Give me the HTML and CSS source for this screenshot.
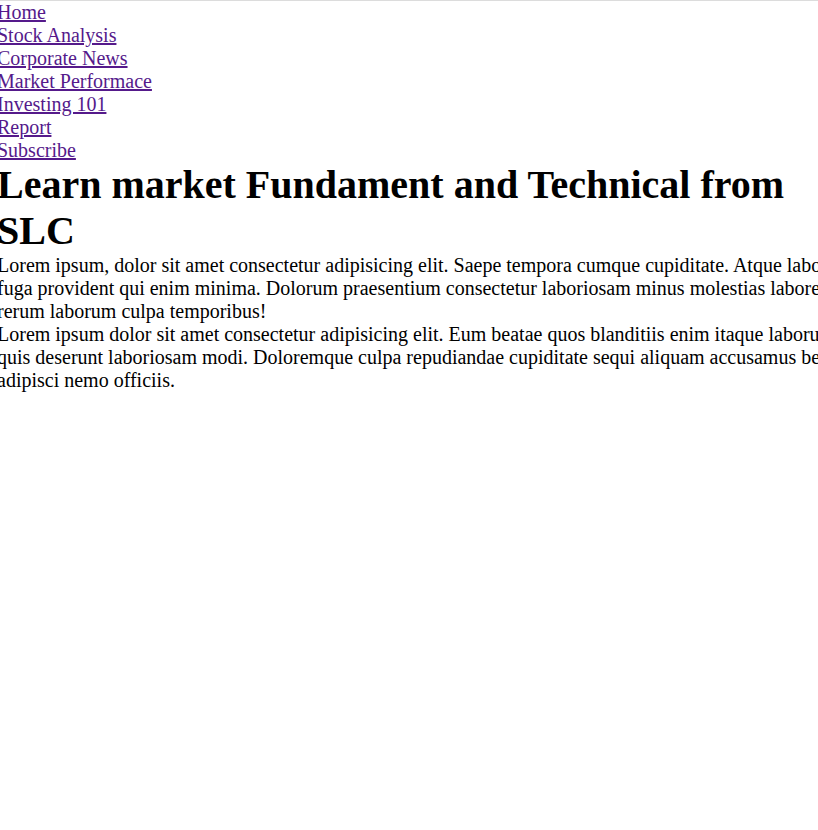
FILE: index.html
```html
<!DOCTYPE html>
<html lang="en">
<head>
<meta charset="utf-8">
<title>SLC</title>
<link rel="stylesheet" href="styles.css">
</head>
<body>
<div class="page">
  <nav class="nav">
    <a class="nav-link" href="#">Home</a>
    <a class="nav-link" href="#">Stock Analysis</a>
    <a class="nav-link" href="#">Corporate News</a>
    <a class="nav-link" href="#">Market Performace</a>
    <a class="nav-link" href="#">Investing 101</a>
    <a class="nav-link" href="#">Report</a>
    <a class="nav-link" href="#">Subscribe</a>
  </nav>
  <h1 class="title">Learn market Fundament and Technical from SLC</h1>
  <p class="text">Lorem ipsum, dolor sit amet consectetur adipisicing elit. Saepe tempora cumque cupiditate. Atque laborum fuga provident qui enim minima. Dolorum praesentium consectetur laboriosam minus molestias labore rerum laborum culpa temporibus!</p>
  <p class="text">Lorem ipsum dolor sit amet consectetur adipisicing elit. Eum beatae quos blanditiis enim itaque laborum quis deserunt laboriosam modi. Doloremque culpa repudiandae cupiditate sequi aliquam accusamus beatae adipisci nemo officiis.</p>
</div>
</body>
</html>
```

FILE: styles.css
```css
html {
  overflow: hidden;
  background: #ffffff;
}
body {
  margin: 0;
  border-top: 1px solid #dcdcdc;
  font-family: "Liberation Serif", "Times New Roman", serif;
  font-size: 20px;
  color: #000000;
}
.page {
  width: 862px;
  margin-left: -3px;
}
.nav {
  display: flex;
  flex-direction: column;
  align-items: flex-start;
}
.nav-link {
  color: #551a8b;
  text-decoration: underline;
  line-height: 23px;
}
.title {
  margin: 0;
  font-size: 40px;
  font-weight: bold;
  line-height: 46px;
}
.text {
  margin: 0;
  line-height: 23px;
}
```
